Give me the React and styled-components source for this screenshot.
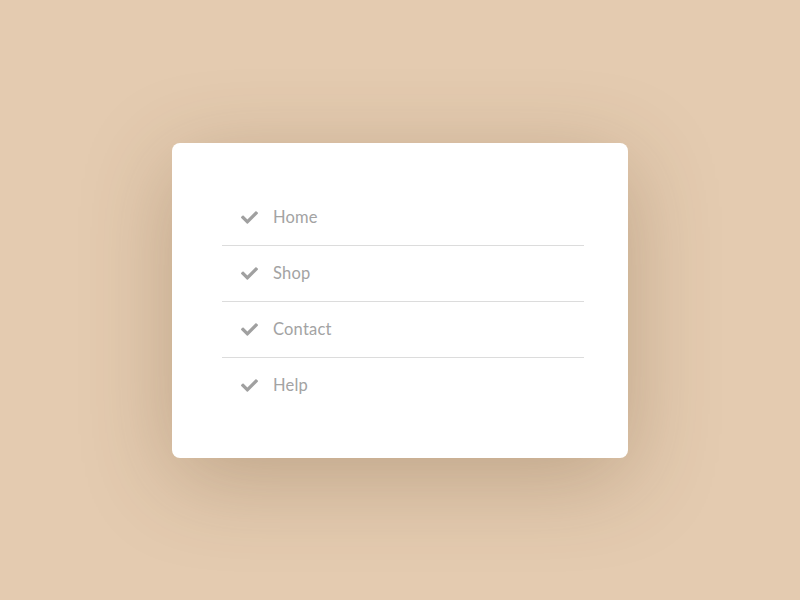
import React from "react";
import styled, { createGlobalStyle } from "styled-components";
import { FaCheck } from "react-icons/fa";

const GlobalStyle = createGlobalStyle`
  html, body {
    margin: 0;
    padding: 0;
    background: #e4cbb0;
  }
`;

const items = ["Home", "Shop", "Contact", "Help"];

function App() {
  return (
    <Page>
      <GlobalStyle />
      <Card>
        <Menu>
          {items.map((label) => (
            <Item key={label}>
              <Check>
                <FaCheck />
              </Check>
              <Label>{label}</Label>
            </Item>
          ))}
        </Menu>
      </Card>
    </Page>
  );
}

const Page = styled.div`
  width: 800px;
  height: 600px;
  display: flex;
  align-items: center;
  justify-content: center;
  background: #e4cbb0;
`;

const Card = styled.div`
  width: 456px;
  height: 315px;
  box-sizing: border-box;
  padding: 47px 44px 0 50px;
  background: #fff;
  border-radius: 8px;
  box-shadow: 0 20px 90px rgba(90, 60, 30, 0.28);
`;

const Menu = styled.ul`
  list-style: none;
  margin: 0;
  padding: 0;
`;

const Item = styled.li`
  display: flex;
  align-items: center;
  height: 55px;
  padding-left: 19px;
  border-bottom: 1px solid #dcdcdc;

  &:last-child {
    border-bottom: none;
  }
`;

const Check = styled.span`
  display: flex;
  color: #a0a0a0;
  font-size: 17px;
  width: 32px;
`;

const Label = styled.span`
  font-family: Lato, "Open Sans", sans-serif;
  font-size: 16.5px;
  color: #a3a3a3;
  letter-spacing: 0.2px;
`;

export default App;
